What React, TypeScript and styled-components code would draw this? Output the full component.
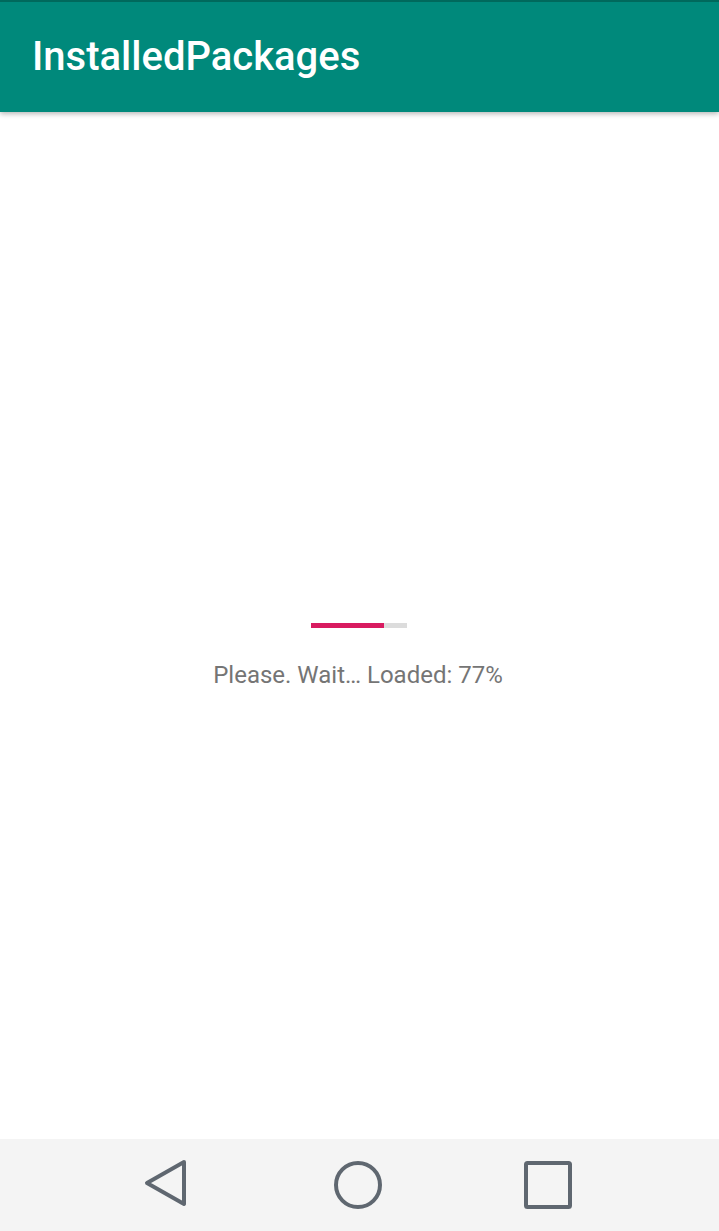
import React from 'react';
import styled, { createGlobalStyle } from 'styled-components';

const GlobalStyle = createGlobalStyle`
  html, body {
    margin: 0;
    padding: 0;
    background: #ffffff;
  }
  #root {
    height: 1231px;
  }
`;

const Screen = styled.div`
  display: flex;
  flex-direction: column;
  width: 719px;
  height: 1231px;
  font-family: Roboto, "Noto Sans", sans-serif;
  background: #ffffff;
`;

const AppBar = styled.header`
  position: relative;
  z-index: 2;
  height: 112px;
  box-sizing: border-box;
  border-top: 2px solid #00695c;
  background: #00897b;
  display: flex;
  align-items: center;
  padding: 0 32px 0;
  box-shadow: 0 2px 5px rgba(0, 0, 0, 0.28);
`;

const Title = styled.h1`
  margin: 0;
  color: #ffffff;
  font-size: 40px;
  font-weight: 500;
  line-height: 48px;
`;

const Content = styled.main`
  flex: 1;
  display: flex;
  flex-direction: column;
  align-items: center;
  padding-top: 511px;
`;

const Track = styled.div`
  width: 96px;
  height: 5px;
  background: #dcdcdc;
  display: flex;
  margin-left: -2px;
`;

const Fill = styled.div`
  height: 100%;
  background: #d81b60;
`;

const Status = styled.p`
  margin: 32px 0 0 -3px;
  font-size: 24px;
  color: #757575;
  line-height: 30px;
`;

const NavBar = styled.nav`
  height: 92px;
  background: #f4f4f4;
  display: flex;
  align-items: center;
  justify-content: center;
  padding-right: 3px;
`;

const NavButton = styled.div`
  width: 190px;
  display: flex;
  justify-content: center;
  align-items: center;
  color: #5f6770;
`;

const progress = 77;

export default function App() {
  return (
    <Screen>
      <GlobalStyle />
      <AppBar>
        <Title>InstalledPackages</Title>
      </AppBar>
      <Content>
        <Track>
          <Fill style={{ width: `${progress}%` }} />
        </Track>
        <Status>Please. Wait… Loaded: {progress}%</Status>
      </Content>
      <NavBar>
        <NavButton>
          <svg width="48" height="52" viewBox="0 0 48 52">
            <path d="M40 3 L3 24 L40 45 Z" fill="none" stroke="currentColor" strokeWidth="4" strokeLinejoin="round" />
          </svg>
        </NavButton>
        <NavButton>
          <svg width="52" height="52" viewBox="0 0 52 52">
            <circle cx="26" cy="26" r="22" fill="none" stroke="currentColor" strokeWidth="4" />
          </svg>
        </NavButton>
        <NavButton>
          <svg width="52" height="52" viewBox="0 0 52 52">
            <rect x="4" y="4" width="44" height="44" rx="1.5" fill="none" stroke="currentColor" strokeWidth="4" />
          </svg>
        </NavButton>
      </NavBar>
    </Screen>
  );
}
